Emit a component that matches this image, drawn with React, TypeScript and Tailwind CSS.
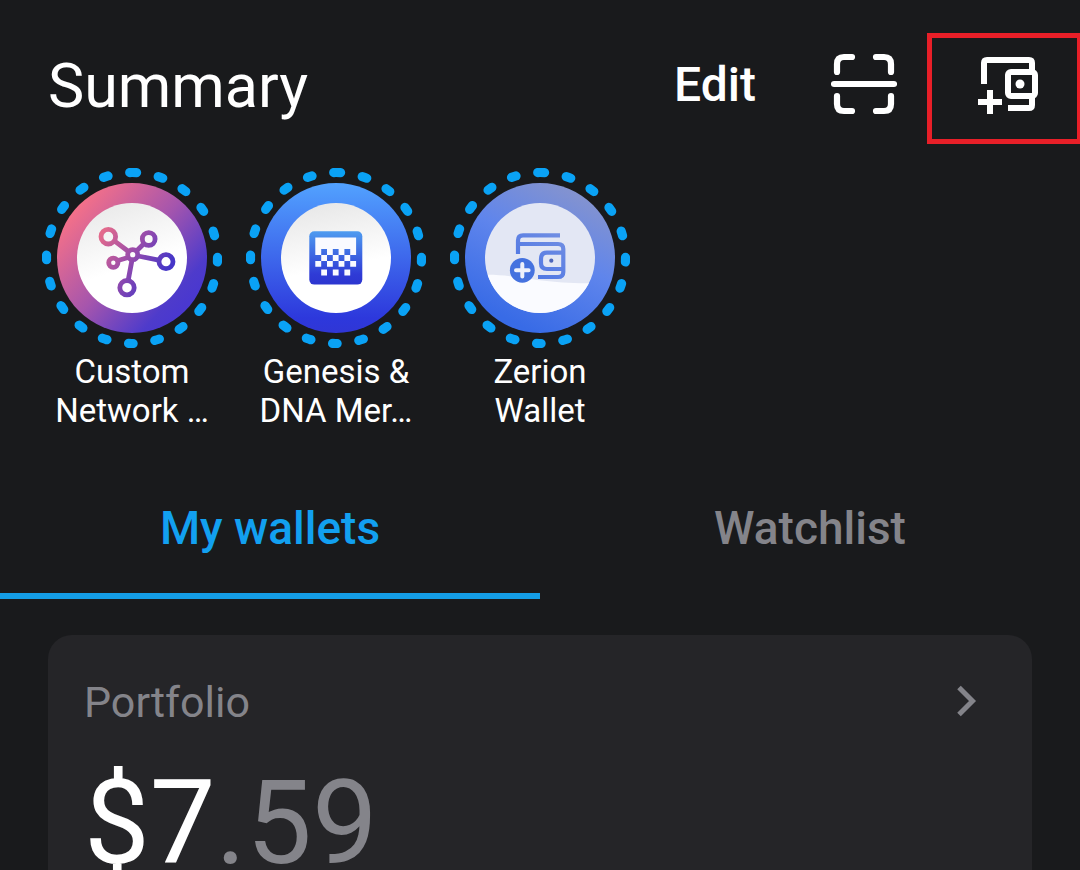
import type { ReactNode } from "react";

function ScanIcon() {
  return (
    <svg width="66" height="66" viewBox="0 0 66 66" fill="none" stroke="#fff" strokeWidth="6.2" strokeLinecap="round" aria-hidden="true">
      <path d="M6 21V13Q6 6 13 6H21" />
      <path d="M45 6H53Q60 6 60 13V21" />
      <path d="M60 45V53Q60 60 53 60H45" />
      <path d="M21 60H13Q6 60 6 53V45" />
      <path d="M3 33H63" />
    </svg>
  );
}

function AddWalletIcon() {
  return (
    <svg width="66" height="66" viewBox="0 0 66 66" fill="none" stroke="#fff" strokeWidth="6" aria-hidden="true">
      <path d="M9 33V12Q9 9 12 9H54Q57 9 57 12V20" />
      <path d="M57 46V54Q57 57 54 57H33" />
      <rect x="33" y="21" width="27" height="24" rx="3" />
      <circle cx="45" cy="33" r="4.5" fill="#fff" stroke="none" />
      <path d="M3 51H27M15 39V63" />
    </svg>
  );
}

function Ring({ children }: { children: ReactNode }) {
  return (
    <svg viewBox="0 0 180 180" className="h-[180px] w-[180px]" fill="none" aria-hidden="true">
      <path
        d="M90 4.5A85.5 85.5 0 0 1 90 175.5A85.5 85.5 0 0 1 90 4.5"
        stroke="#0aa2f5"
        strokeWidth="9.2"
        strokeLinecap="round"
        strokeDasharray="4.7 22"
      />
      {children}
    </svg>
  );
}

function NetworkArt() {
  return (
    <Ring>
      <defs>
        <linearGradient id="net-ring" x1="32" y1="42" x2="142" y2="138" gradientUnits="userSpaceOnUse">
          <stop offset="0" stopColor="#f47089" />
          <stop offset="0.5" stopColor="#a555ad" />
          <stop offset="0.9" stopColor="#4e3bcb" />
          <stop offset="1" stopColor="#4a38cf" />
        </linearGradient>
        <linearGradient id="net-glyph" x1="62" y1="62" x2="124" y2="102" gradientUnits="userSpaceOnUse">
          <stop offset="0" stopColor="#e36a8c" />
          <stop offset="0.45" stopColor="#a04ea8" />
          <stop offset="1" stopColor="#4636c8" />
        </linearGradient>
        <linearGradient id="net-face" x1="65" y1="40" x2="85" y2="100" gradientUnits="userSpaceOnUse">
          <stop offset="0" stopColor="#ebebeb" />
          <stop offset="1" stopColor="#ffffff" />
        </linearGradient>
      </defs>
      <circle cx="90" cy="90" r="75" fill="url(#net-ring)" />
      <circle cx="90" cy="90" r="55" fill="url(#net-face)" />
      <g stroke="url(#net-glyph)" strokeWidth="4.8">
        <path d="M72.7 73.2L86.5 83.5M101.3 76.2L94.5 83M86 89.5L76 92.5M96 88L116.7 92.2M90 92L86.2 112.3" />
        <circle cx="66.3" cy="68.7" r="7.3" />
        <circle cx="106.7" cy="71" r="6.4" />
        <circle cx="90.7" cy="86.7" r="5" />
        <circle cx="71.3" cy="94.7" r="4.6" />
        <circle cx="124" cy="93.7" r="7" />
        <circle cx="85" cy="119.7" r="7.2" />
      </g>
    </Ring>
  );
}

function GenesisArt() {
  return (
    <Ring>
      <defs>
        <linearGradient id="gen-ring" x1="90" y1="15" x2="90" y2="165" gradientUnits="userSpaceOnUse">
          <stop offset="0" stopColor="#52a2ff" />
          <stop offset="0.9" stopColor="#2d38dc" />
          <stop offset="1" stopColor="#3036d6" />
        </linearGradient>
        <linearGradient id="gen-glyph" x1="90" y1="63" x2="90" y2="117" gradientUnits="userSpaceOnUse">
          <stop offset="0" stopColor="#4f9cf0" />
          <stop offset="0.8" stopColor="#2f3bd6" />
          <stop offset="1" stopColor="#2c35cf" />
        </linearGradient>
        <linearGradient id="gen-face" x1="75" y1="36" x2="88" y2="100" gradientUnits="userSpaceOnUse">
          <stop offset="0" stopColor="#e8e8e8" />
          <stop offset="1" stopColor="#ffffff" />
        </linearGradient>
      </defs>
      <circle cx="90" cy="90" r="75" fill="url(#gen-ring)" />
      <circle cx="90" cy="90" r="55" fill="url(#gen-face)" />
      <rect x="63.3" y="63.3" width="53" height="53.3" rx="5" fill="url(#gen-glyph)" />
      <path
        fill="#fafaff"
        d="M69.3 69.5H110.1V87H104.2V81H98.4V87H92.6V81H86.8V87H81V81H75.2V87H69.3ZM75.2 87H81V93H75.2ZM86.8 87H92.6V93H86.8ZM98.4 87H104.2V93H98.4ZM69.3 93H75.2V98.8H69.3ZM81 93H86.8V98.8H81ZM92.6 93H98.4V98.8H92.6ZM104.2 93H110.1V98.8H104.2ZM75.2 101.4H81V107.4H75.2ZM86.8 101.4H92.6V107.4H86.8ZM98.4 101.4H104.2V107.4H98.4Z"
      />
    </Ring>
  );
}

function ZerionArt() {
  return (
    <Ring>
      <defs>
        <linearGradient id="zer-ring" x1="130" y1="25" x2="65" y2="155" gradientUnits="userSpaceOnUse">
          <stop offset="0" stopColor="#8493cf" />
          <stop offset="0.45" stopColor="#5f85ec" />
          <stop offset="1" stopColor="#386be6" />
        </linearGradient>
        <linearGradient id="zer-glyph" x1="110" y1="64" x2="75" y2="112" gradientUnits="userSpaceOnUse">
          <stop offset="0" stopColor="#728fe3" />
          <stop offset="1" stopColor="#4a74e4" />
        </linearGradient>
        <clipPath id="zer-clip">
          <circle cx="90" cy="90" r="55" />
        </clipPath>
      </defs>
      <circle cx="90" cy="90" r="75" fill="url(#zer-ring)" />
      <circle cx="90" cy="90" r="55" fill="#e3e7f4" />
      <path d="M30 107C65 105 90 117 150 115V150H30Z" fill="#fafbff" clipPath="url(#zer-clip)" />
      <g stroke="url(#zer-glyph)" strokeWidth="4.2">
        <path d="M110 67.3H73Q68 67.3 68 72.5V86" />
        <path d="M69 76H108Q113.3 76 113.3 81V104Q113.3 109 108 109H88" />
        <path d="M113.3 84.7H97Q91 84.7 91 91V95Q91 101 97 101H113.3" />
      </g>
      <circle cx="101.3" cy="92.7" r="2.1" fill="#4d66ba" />
      <circle cx="72.3" cy="102.3" r="12.4" fill="#4572df" />
      <path d="M66 102.3H78.6M72.3 96V108.6" stroke="#eef1fb" strokeWidth="4" strokeLinecap="round" />
    </Ring>
  );
}

const stories = [
  { lines: ["Custom", "Network …"], art: <NetworkArt /> },
  { lines: ["Genesis &", "DNA Mer…"], art: <GenesisArt /> },
  { lines: ["Zerion", "Wallet"], art: <ZerionArt /> },
];

export default function App() {
  return (
    <div className="flex h-screen flex-col overflow-hidden bg-[#191a1c] font-['Roboto',sans-serif] text-white">
      <header className="flex items-start pt-[33px] pl-12">
        <h1 className="flex-1 text-[61px] leading-[106px] font-normal">Summary</h1>
        <button type="button" className="mr-[75px] text-[48px] leading-[104px] font-medium">
          Edit
        </button>
        <button type="button" aria-label="Scan code" className="flex h-[102px] items-center">
          <ScanIcon />
        </button>
        <button
          type="button"
          aria-label="Add wallet"
          className="-mr-0.5 ml-[30px] flex h-[111px] w-[155px] items-start border-[5px] border-[#e81f28] pt-[13px] pl-[43px]"
        >
          <AddWalletIcon />
        </button>
      </header>

      <ul className="mt-6 flex gap-6 px-[42px]">
        {stories.map((story) => (
          <li key={story.lines[0]}>
            <button type="button" className="flex w-[180px] flex-col items-center">
              {story.art}
              <span className="mt-1 text-center text-[33px] leading-[39px]">
                {story.lines[0]}
                <br />
                {story.lines[1]}
              </span>
            </button>
          </li>
        ))}
      </ul>

      <nav role="tablist" className="mt-[34px] grid grid-cols-2 text-[46px] font-medium">
        <button type="button" role="tab" aria-selected="true" className="border-b-6 border-[#149de6] leading-[129px] text-[#12a0f0]">
          My wallets
        </button>
        <button type="button" role="tab" aria-selected="false" className="border-b-6 border-transparent leading-[129px] text-[#84848a]">
          Watchlist
        </button>
      </nav>

      <main className="mx-12 mt-9 flex-1 rounded-t-3xl bg-[#252528] px-9 pt-9">
        <a href="#portfolio" className="flex items-center justify-between pr-[17px] text-[#84848a]">
          <h2 className="text-[43px] leading-[62px] font-normal">Portfolio</h2>
          <svg width="24" height="36" viewBox="0 0 24 36" fill="none" stroke="currentColor" strokeWidth="5" aria-hidden="true">
            <path d="M4 3.5L17.5 17L4 30.5" />
          </svg>
        </a>
        <p className="mt-5 text-[117px] leading-[140px]">
          $7<span className="text-[#84848a]">.59</span>
        </p>
      </main>
    </div>
  );
}
